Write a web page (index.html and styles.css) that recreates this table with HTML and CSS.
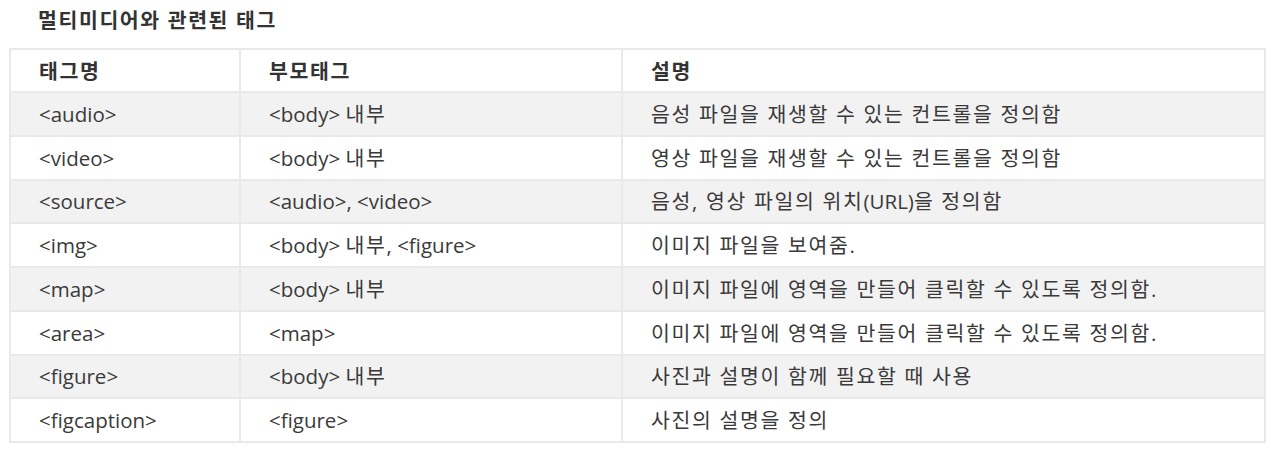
FILE: index.html
```html
<!DOCTYPE html>
<html lang="ko">
<head>
<meta charset="utf-8">
<link rel="stylesheet" href="styles.css">
</head>
<body>
<div class="page">
  <h3 class="title">멀티미디어와 관련된 태그</h3>
  <table class="tags">
    <colgroup>
      <col class="c1"><col class="c2"><col class="c3">
    </colgroup>
    <thead>
      <tr><th class="ko">태그명</th><th class="ko">부모태그</th><th class="ko">설명</th></tr>
    </thead>
    <tbody>
      <tr><td>&lt;audio&gt;</td><td>&lt;body&gt; <span class="ko">내부</span></td><td class="ko">음성 파일을 재생할 수 있는 컨트롤을 정의함</td></tr>
      <tr><td>&lt;video&gt;</td><td>&lt;body&gt; <span class="ko">내부</span></td><td class="ko">영상 파일을 재생할 수 있는 컨트롤을 정의함</td></tr>
      <tr><td>&lt;source&gt;</td><td>&lt;audio&gt;, &lt;video&gt;</td><td><span class="ko">음성, 영상 파일의 위치</span>(URL)<span class="ko">을 정의함</span></td></tr>
      <tr><td>&lt;img&gt;</td><td>&lt;body&gt; <span class="ko">내부</span>, &lt;figure&gt;</td><td class="ko">이미지 파일을 보여줌.</td></tr>
      <tr><td>&lt;map&gt;</td><td>&lt;body&gt; <span class="ko">내부</span></td><td class="ko">이미지 파일에 영역을 만들어 클릭할 수 있도록 정의함.</td></tr>
      <tr><td>&lt;area&gt;</td><td>&lt;map&gt;</td><td class="ko">이미지 파일에 영역을 만들어 클릭할 수 있도록 정의함.</td></tr>
      <tr><td>&lt;figure&gt;</td><td>&lt;body&gt; <span class="ko">내부</span></td><td class="ko">사진과 설명이 함께 필요할 때 사용</td></tr>
      <tr><td>&lt;figcaption&gt;</td><td>&lt;figure&gt;</td><td class="ko">사진의 설명을 정의</td></tr>
    </tbody>
  </table>
</div>
</body>
</html>
```

FILE: styles.css
```css
html, body {
  margin: 0;
  padding: 0;
  background: #ffffff;
}

.page {
  padding: 5px 7px 0 9px;
  font-family: "Open Sans", "Noto Sans CJK KR", sans-serif;
  color: #333333;
}

.title {
  margin: 0 0 13px 0;
  padding-left: 29px;
  font-size: 20.5px;
  line-height: 30px;
  font-weight: 700;
  letter-spacing: 1.6px;
  color: #333333;
}

.tags {
  width: 1257px;
  border-collapse: collapse;
  table-layout: fixed;
  font-size: 20.5px;
  border: 2px solid #e9e9e9;
}

.c1 { width: 230px; }
.c2 { width: 382px; }

.tags th,
.tags td {
  border: 2px solid #e9e9e9;
  padding: 0 0 0 28px;
  height: 41.75px;
  line-height: 24px;
  text-align: left;
  vertical-align: middle;
  white-space: nowrap;
  color: #3a3a3a;
}

.tags th {
  font-weight: 700;
  color: #333333;
  height: 41px;
}

.ko {
  letter-spacing: 1.65px;
}

.tags tbody tr:nth-child(odd) {
  background: #f2f2f2;
}
```
